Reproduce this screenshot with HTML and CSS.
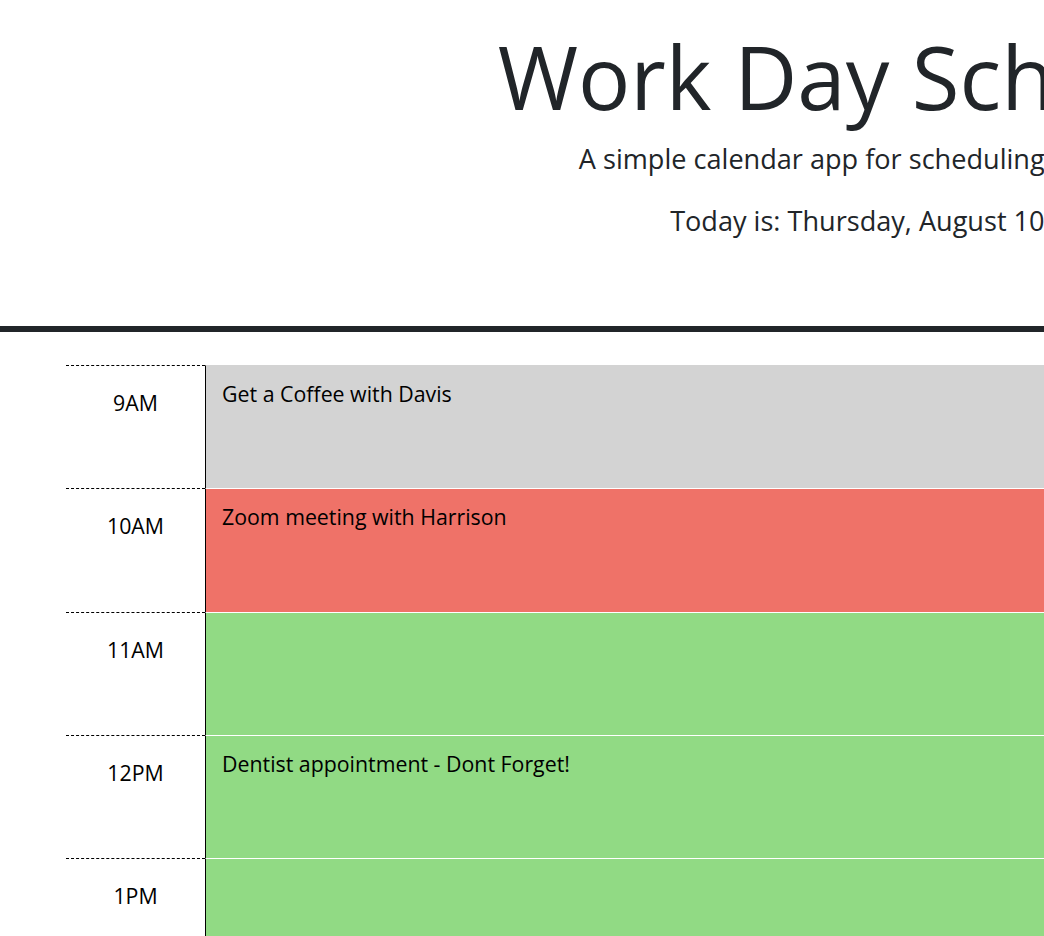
FILE: index.html
```html
<!DOCTYPE html>
<html lang="en">
<head>
<meta charset="utf-8">
<title>Work Day Scheduler</title>
<link rel="stylesheet" href="styles.css">
</head>
<body>
<div class="page">
  <header class="header">
    <h1 class="title">Work Day Scheduler</h1>
    <p class="lead">A simple calendar app for scheduling your work day</p>
    <p class="lead today">Today is: Thursday, August 10th 2023</p>
  </header>
  <main class="schedule">
    <div class="block">
      <div class="hour">9AM</div>
      <div class="desc past">Get a Coffee with Davis</div>
    </div>
    <div class="block">
      <div class="hour">10AM</div>
      <div class="desc present">Zoom meeting with Harrison</div>
    </div>
    <div class="block">
      <div class="hour">11AM</div>
      <div class="desc future"></div>
    </div>
    <div class="block">
      <div class="hour">12PM</div>
      <div class="desc future">Dentist appointment - Dont Forget!</div>
    </div>
    <div class="block">
      <div class="hour">1PM</div>
      <div class="desc future"></div>
    </div>
    <div class="block">
      <div class="hour">2PM</div>
      <div class="desc future"></div>
    </div>
  </main>
</div>
</body>
</html>
```
FILE: styles.css
```css
html, body {
  margin: 0;
  padding: 0;
  overflow: hidden;
  background: #ffffff;
}

body {
  font-family: "Open Sans", "Liberation Sans", sans-serif;
  color: #212529;
}

.page {
  width: 1810px;
}

.header {
  text-align: center;
  padding-top: 24px;
  height: 302px;
  box-sizing: content-box;
  border-bottom: 6px solid #212529;
}

.title {
  margin: 0 0 0 4px;
  font-size: 87px;
  font-weight: 400;
  line-height: 104px;
}

.lead {
  margin: 11px 0 0;
  font-size: 27.1px;
  line-height: 40px;
}

.today {
  margin-top: 22px;
}

.schedule {
  margin-top: 33px;
  padding-left: 66px;
}

.block {
  display: flex;
  height: 123.25px;
  box-sizing: border-box;
}

.hour {
  width: 139px;
  flex: none;
  box-sizing: border-box;
  border-top: 1px dashed #000000;
  padding-top: 21px;
  text-align: center;
  color: #000000;
  font-size: 21.33px;
  line-height: 32px;
}

.desc {
  flex: 1;
  border-left: 1px solid #000000;
  border-top: 1px solid #ffffff;
  padding: 12px 16px;
  color: #000000;
  font-size: 21.33px;
  line-height: 32px;
}

.block:first-child .desc {
  border-top-color: transparent;
}

.past {
  background: #d3d3d3;
}

.present {
  background: #ef7268;
}

.future {
  background: #91da84;
}
```
